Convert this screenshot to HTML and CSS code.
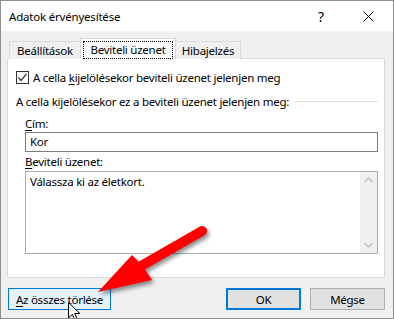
FILE: index.html
```html
<!DOCTYPE html>
<html lang="hu">
<head>
  <meta charset="UTF-8">
  <title>Adatok érvényesítése</title>
  <link rel="stylesheet" href="styles.css">
</head>
<body>

<div class="dialog">
  <div class="titlebar">
    <span class="title">Adatok érvényesítése</span>
    <span class="help">?</span>
    <svg class="close" width="11" height="11" viewBox="0 0 11 11">
      <path d="M0.5 0.5 L10.5 10.5 M10.5 0.5 L0.5 10.5" stroke="#000" stroke-width="1"/>
    </svg>
  </div>

  <div class="content">
    <div class="tabs">
      <div class="tab first">Beállítások</div>
      <div class="tab active"><span class="focus">Beviteli üzenet</span></div>
      <div class="tab last">Hibajelzés</div>
    </div>

    <div class="panel">
      <label class="check-row">
        <span class="checkbox">
          <svg width="11" height="11" viewBox="0 0 11 11">
            <path d="M1.5 5.5 L4 8.5 L9.5 2" fill="none" stroke="#333" stroke-width="1.2"/>
          </svg>
        </span>
        <span>A cella <u>k</u>ijelölésekor beviteli üzenet jelenjen meg</span>
      </label>

      <div class="group-row">
        <span>A cella kijelölésekor ez a beviteli üzenet jelenjen meg:</span>
        <span class="rule"></span>
      </div>

      <div class="fields">
        <div class="field-label"><u>C</u>ím:</div>
        <div class="input">Kor</div>

        <div class="field-label second"><u>B</u>eviteli üzenet:</div>
        <div class="textarea">
          <div class="textarea-text">Válassza ki az életkort.</div>
          <div class="scrollbar">
            <svg width="17" height="17" viewBox="0 0 17 17">
              <path d="M4.5 10 L8.5 6 L12.5 10" fill="none" stroke="#bfbfbf" stroke-width="1.5"/>
            </svg>
            <svg width="17" height="17" viewBox="0 0 17 17">
              <path d="M4.5 7 L8.5 11 L12.5 7" fill="none" stroke="#bfbfbf" stroke-width="1.5"/>
            </svg>
          </div>
        </div>
      </div>
    </div>

    <div class="buttons">
      <button class="btn hover"><u>A</u>z összes törlése</button>
      <button class="btn default">OK</button>
      <button class="btn">Mégse</button>
    </div>
  </div>

  <!-- annotation arrow over the dialog -->
  <svg class="arrow" width="394" height="319" viewBox="0 0 394 319">
    <line x1="202" y1="231" x2="141" y2="266" stroke="#f00" stroke-width="10" stroke-linecap="round"/>
    <polygon points="98,292 132,255 142,265 152,280" fill="#f00"/>
  </svg>

  <svg class="cursor" width="14" height="20" viewBox="0 0 14 20">
    <path d="M0.5 0.5 L0.5 16 L4.3 12.3 L7 18.5 L9.3 17.5 L6.7 11.5 L11.8 11.5 Z" fill="#fff" stroke="#000" stroke-width="1"/>
  </svg>
</div>

</body>
</html>
```

FILE: styles.css
```css
* { box-sizing: border-box; }
body {
  margin: 0;
  font-family: 'Noto Sans', sans-serif;
  font-size: 11.5px;
  letter-spacing: -0.25px;
  color: #000;
}
u { text-decoration-thickness: 1px; text-underline-offset: 2px; }

.dialog {
  position: relative;
  width: 394px;
  height: 319px;
  border: 1px solid #8f8f8f;
  background: #f0f0f0;
  overflow: hidden;
}

.titlebar {
  height: 30px;
  background: #fff;
  display: flex;
  align-items: center;
  padding-left: 8px;
}
.title {
  font-size: 11.5px;
  letter-spacing: -0.2px;
  flex: 1;
}
.help {
  font-size: 14px;
  width: 18px;
  margin-right: 27px;
}
.close { margin-right: 19px; }

.content {
  padding: 7px 8px 0 6px;
}

.tabs {
  display: flex;
  align-items: flex-end;
  height: 21px;
  margin-bottom: -1px;
  padding-left: 2px;
  position: relative;
  z-index: 1;
}
.tab {
  height: 18px;
  line-height: 17px;
  border: 1px solid #d9d9d9;
  border-bottom: none;
  background: #f0f0f0;
  text-align: center;
}
.tab.first { width: 71px; border-right: none; }
.tab.last { width: 65px; border-left: none; }
.tab.active {
  width: 96px;
  height: 21px;
  background: #fff;
  padding: 3px 3px 0;
  line-height: 15px;
}
.focus {
  display: block;
  outline: 1px dotted #000;
  height: 16px;
}

.panel {
  height: 220px;
  background: #fff;
  border: 1px solid #d9d9d9;
  padding: 12px 6px 0 8px;
}

.check-row {
  display: flex;
  align-items: center;
  gap: 4px;
  height: 13px;
}
.checkbox {
  width: 13px;
  height: 13px;
  border: 1px solid #333;
  display: flex;
  align-items: center;
  justify-content: center;
}

.group-row {
  display: flex;
  align-items: center;
  gap: 6px;
  margin-top: 10px;
  height: 14px;
}
.rule {
  flex: 1;
  border-top: 1px solid #dcdcdc;
}

.fields {
  padding: 9px 0 0 9px;
}
.field-label {
  height: 14px;
  line-height: 14px;
  margin-bottom: 1px;
}
.field-label.second {
  margin-top: 3px;
  margin-bottom: 2px;
}
.input {
  height: 20px;
  border: 1px solid #7a7a7a;
  padding: 0 4px;
  line-height: 18px;
}
.textarea {
  height: 83px;
  border: 1px solid #adadad;
  display: flex;
}
.textarea-text {
  flex: 1;
  padding: 3px 4px;
  line-height: 14px;
}
.scrollbar {
  width: 17px;
  background: #f0f0f0;
  display: flex;
  flex-direction: column;
  justify-content: space-between;
}

.buttons {
  display: flex;
  gap: 9px;
  padding-top: 10px;
  padding-left: 1px;
}
.btn {
  font-family: inherit;
  font-size: 11.5px;
  letter-spacing: inherit;
  height: 22px;
  width: 75px;
  padding: 0;
  border: 1px solid #adadad;
  background: #e1e1e1;
  color: #000;
}
.btn.hover {
  width: 103px;
  background: #e5f1fb;
  border-color: #0078d7;
  margin-right: auto;
}
.btn.default {
  border: 2px solid #0078d7;
}

.arrow {
  position: absolute;
  left: -1px;
  top: -1px;
  filter: drop-shadow(2px 3px 2px rgba(0, 0, 0, 0.45));
}
.cursor {
  position: absolute;
  left: 67px;
  top: 301px;
}
```
